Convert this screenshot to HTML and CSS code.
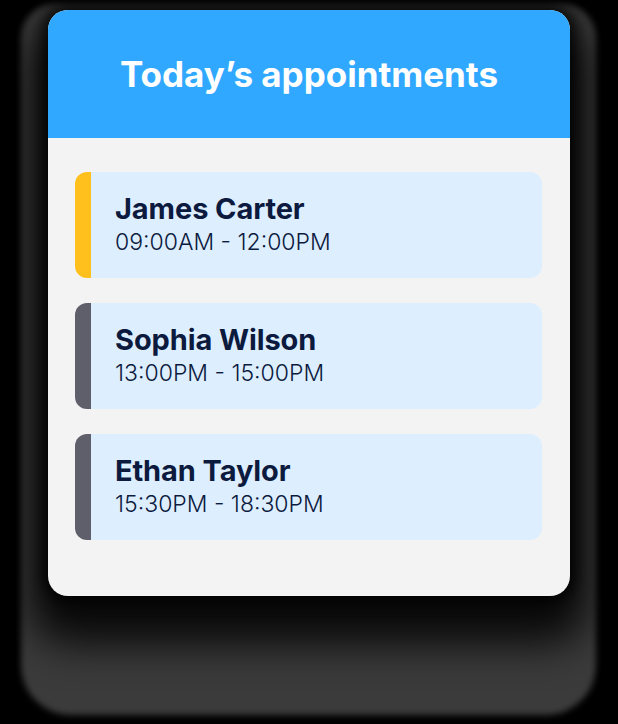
FILE: index.html
```html
<!DOCTYPE html>
<html>
<head>
<meta charset="utf-8">
<link rel="stylesheet" href="styles.css">
</head>
<body>
<div class="stage">
  <div class="card">
    <div class="header"><h1 class="title">Today’s appointments</h1></div>
    <div class="list">
      <div class="item item-yellow">
        <div class="name">James Carter</div>
        <div class="time">09:00AM - 12:00PM</div>
      </div>
      <div class="item item-grey">
        <div class="name">Sophia Wilson</div>
        <div class="time">13:00PM - 15:00PM</div>
      </div>
      <div class="item item-grey">
        <div class="name">Ethan Taylor</div>
        <div class="time">15:30PM - 18:30PM</div>
      </div>
    </div>
  </div>
</div>
</body>
</html>
```
FILE: styles.css
```css
html, body {
  margin: 0;
  padding: 0;
  background: #000;
}
body {
  width: 618px;
  height: 724px;
  overflow: hidden;
  font-family: Inter, "Noto Sans", sans-serif;
}
.stage {
  position: relative;
  padding: 10px 0 0 48px;
}
.stage::before {
  content: "";
  position: absolute;
  left: 21px;
  top: 4px;
  width: 575px;
  height: 711px;
  background: #3b3b3b;
  border-radius: 34px 34px 50px 50px;
  filter: blur(3px);
}
.card {
  position: relative;
  width: 522px;
  height: 586px;
  border-radius: 20px;
  overflow: hidden;
  background: #F3F3F3;
  box-shadow: 0 0 14px 6px rgba(0,0,0,0.8), 0 30px 40px 18px rgba(0,0,0,0.85);
}
.header {
  height: 128px;
  background: #31A8FF;
  display: flex;
  align-items: center;
  justify-content: center;
}
.title {
  margin: 0;
  color: #fff;
  font-size: 35px;
  font-weight: 700;
  line-height: 42px;
  letter-spacing: 0;
}
.list {
  padding: 34px 28px 0 27px;
  display: flex;
  flex-direction: column;
  gap: 25px;
}
.item {
  height: 106px;
  box-sizing: border-box;
  background: #DDEEFF;
  border-radius: 12px;
  border-left: 16px solid #5F5E6B;
  padding: 20px 0 0 24px;
  color: #0C1A3E;
}
.item-yellow { border-left-color: #FFC01E; }
.item-grey { border-left-color: #5F5E6B; }
.name {
  font-size: 29px;
  font-weight: 700;
  line-height: 34px;
  letter-spacing: -0.1px;
}
.time {
  font-size: 23px;
  font-weight: 300;
  line-height: 28px;
  margin-top: 2px;
}
```
